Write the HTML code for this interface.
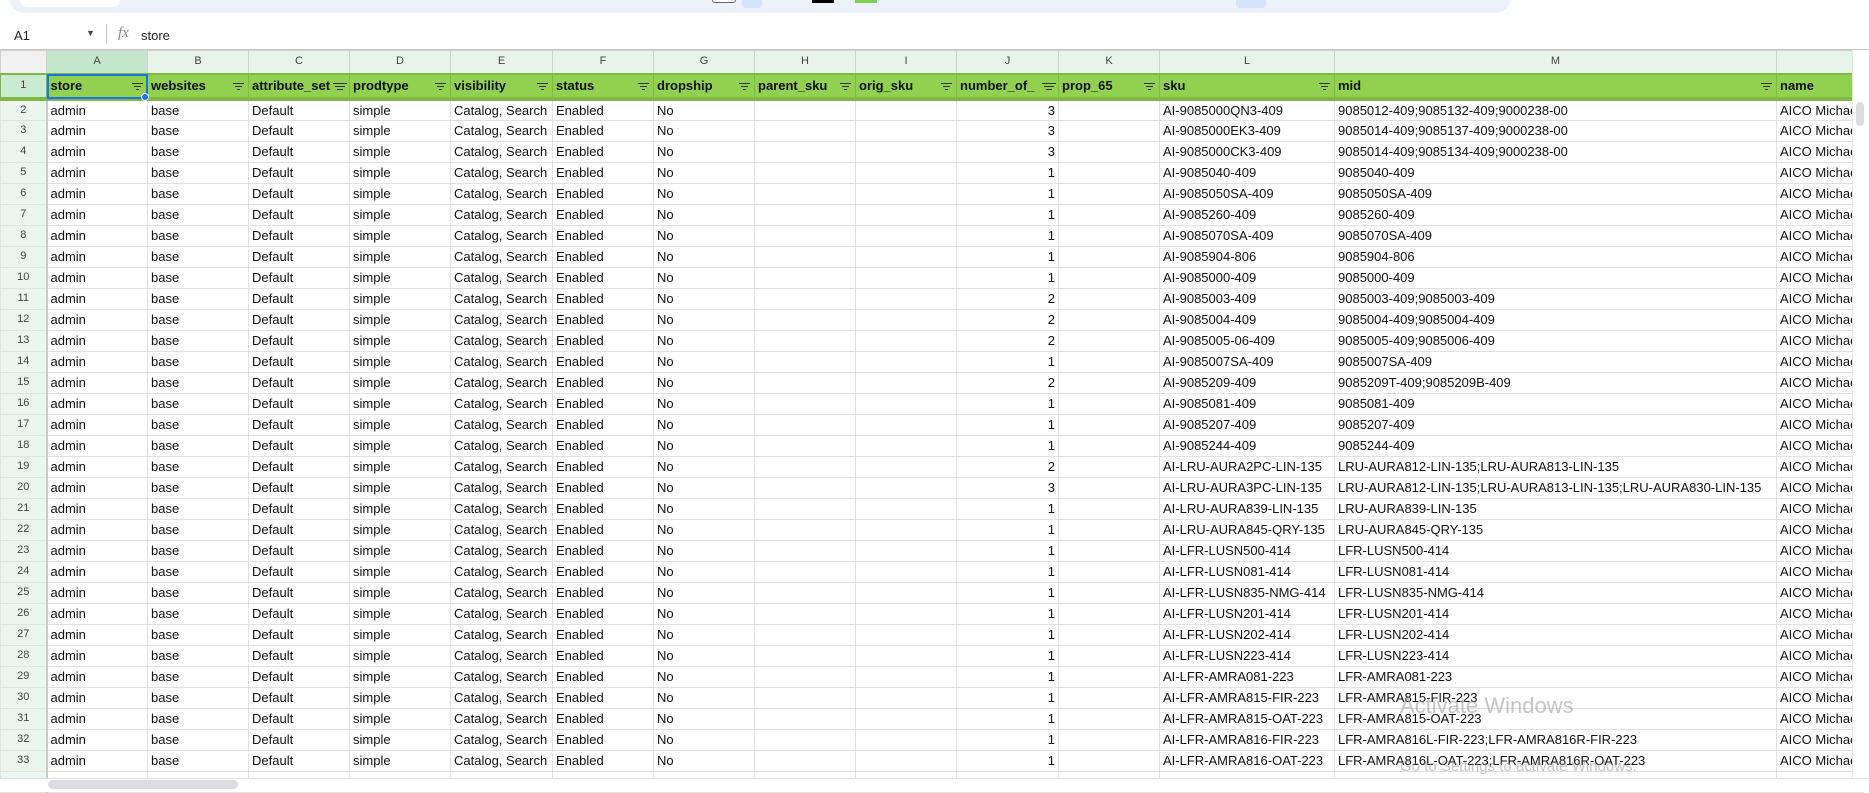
<!DOCTYPE html>
<html><head><meta charset="utf-8"><style>
*{margin:0;padding:0;box-sizing:border-box}
body{width:1869px;height:792px;overflow:hidden;background:#fff;font-family:"Liberation Sans",Arial,sans-serif;position:relative}
.tb{position:absolute;left:10px;top:-20px;width:1500px;height:33px;background:#edf2fa;border-radius:14px}
.fb{position:absolute;left:0;top:20px;width:1869px;height:30px;border-bottom:1px solid #c7c7c7;font-size:13px;color:#222}
table{position:absolute;left:0;top:50px;border-collapse:collapse;table-layout:fixed;font-size:13px}
td{height:21px;border:1px solid #e1e1e1;padding:0 3px;white-space:nowrap;overflow:hidden;color:#111;line-height:19px}
td.n{text-align:center;font-size:11px;color:#444;background:#eaf6ed;border-right:2px solid #c9c9c9}
tr.h td{height:23px;background:#e6f4ea;text-align:center;font-size:11px;color:#444;border-color:#d0d0d0}
tr.h td.sel{background:#c4e7cc}
tr.r1 td{height:25px;background:#92d050;font-weight:bold;border-top:2px solid #2f8a3a;border-bottom:4px solid #c8c8c8;border-color:#7fb846;position:relative}
tr.r1 td.n{background:#c9ebd1;font-weight:normal}
.f{position:absolute;right:4px;top:8px;width:11px;height:7px;border-top:1.3px solid #333}
.f:before{content:"";position:absolute;left:2px;right:2px;top:2px;border-top:1.3px solid #333}
.f:after{content:"";position:absolute;left:4px;right:4px;top:5px;border-top:1.3px solid #333}
td.j{text-align:right}
</style></head><body>
<div class="tb"></div>
<div style="position:absolute;left:20px;top:-8px;width:100px;height:15px;background:#fff;border-radius:8px"></div>
<div style="position:absolute;left:712px;top:0;width:24px;height:3px;background:#fff;border:1px solid #666;border-top:none;border-radius:0 0 4px 4px"></div>
<div style="position:absolute;left:742px;top:0;width:20px;height:8px;background:#d3e3fd;border-radius:0 0 3px 3px"></div>
<div style="position:absolute;left:812px;top:0;width:22px;height:3px;background:#000"></div>
<div style="position:absolute;left:855px;top:0;width:22px;height:3px;background:#7cd152"></div>
<div style="position:absolute;left:1236px;top:0;width:30px;height:8px;background:#d3e3fd;border-radius:0 0 3px 3px"></div>
<div class="fb">
<span style="position:absolute;left:14px;top:8px">A1</span>
<span style="position:absolute;left:86px;top:8px;font-size:9px;color:#444">▼</span>
<span style="position:absolute;left:106px;top:4px;width:1px;height:20px;background:#c7c7c7"></span>
<span style="position:absolute;left:118px;top:5px;font-family:'Liberation Serif',serif;font-style:italic;color:#888;font-size:15px">fx</span>
<span style="position:absolute;left:141px;top:8px">store</span>
</div>
<table>
<colgroup><col style="width:46px"><col style="width:101px"><col style="width:101px"><col style="width:101px"><col style="width:101px"><col style="width:102px"><col style="width:101px"><col style="width:101px"><col style="width:101px"><col style="width:101px"><col style="width:102px"><col style="width:101px"><col style="width:175px"><col style="width:442px"><col style="width:79px"></colgroup>
<tr class="h"><td style="background:#f1f1f1"></td><td class="sel">A</td><td>B</td><td>C</td><td>D</td><td>E</td><td>F</td><td>G</td><td>H</td><td>I</td><td>J</td><td>K</td><td>L</td><td>M</td><td></td></tr>
<tr class="r1"><td class="n">1</td><td style="outline:2px solid #1a73e8;outline-offset:-2px">store<i class="f"></i></td><td>websites<i class="f"></i></td><td>attribute_set<i class="f" style="background:#92d050;width:14px;right:2px"></i></td><td>prodtype<i class="f"></i></td><td>visibility<i class="f"></i></td><td>status<i class="f"></i></td><td>dropship<i class="f"></i></td><td>parent_sku<i class="f"></i></td><td>orig_sku<i class="f"></i></td><td>number_of_<i class="f" style="background:#92d050;width:14px;right:2px"></i></td><td>prop_65<i class="f"></i></td><td>sku<i class="f"></i></td><td>mid<i class="f"></i></td><td>name</td></tr>
<tr><td class="n">2</td><td>admin</td><td>base</td><td>Default</td><td>simple</td><td>Catalog, Search</td><td>Enabled</td><td>No</td><td></td><td></td><td class="j">3</td><td></td><td>AI-9085000QN3-409</td><td>9085012-409;9085132-409;9000238-00</td><td>AICO Michael</td></tr>
<tr><td class="n">3</td><td>admin</td><td>base</td><td>Default</td><td>simple</td><td>Catalog, Search</td><td>Enabled</td><td>No</td><td></td><td></td><td class="j">3</td><td></td><td>AI-9085000EK3-409</td><td>9085014-409;9085137-409;9000238-00</td><td>AICO Michael</td></tr>
<tr><td class="n">4</td><td>admin</td><td>base</td><td>Default</td><td>simple</td><td>Catalog, Search</td><td>Enabled</td><td>No</td><td></td><td></td><td class="j">3</td><td></td><td>AI-9085000CK3-409</td><td>9085014-409;9085134-409;9000238-00</td><td>AICO Michael</td></tr>
<tr><td class="n">5</td><td>admin</td><td>base</td><td>Default</td><td>simple</td><td>Catalog, Search</td><td>Enabled</td><td>No</td><td></td><td></td><td class="j">1</td><td></td><td>AI-9085040-409</td><td>9085040-409</td><td>AICO Michael</td></tr>
<tr><td class="n">6</td><td>admin</td><td>base</td><td>Default</td><td>simple</td><td>Catalog, Search</td><td>Enabled</td><td>No</td><td></td><td></td><td class="j">1</td><td></td><td>AI-9085050SA-409</td><td>9085050SA-409</td><td>AICO Michael</td></tr>
<tr><td class="n">7</td><td>admin</td><td>base</td><td>Default</td><td>simple</td><td>Catalog, Search</td><td>Enabled</td><td>No</td><td></td><td></td><td class="j">1</td><td></td><td>AI-9085260-409</td><td>9085260-409</td><td>AICO Michael</td></tr>
<tr><td class="n">8</td><td>admin</td><td>base</td><td>Default</td><td>simple</td><td>Catalog, Search</td><td>Enabled</td><td>No</td><td></td><td></td><td class="j">1</td><td></td><td>AI-9085070SA-409</td><td>9085070SA-409</td><td>AICO Michael</td></tr>
<tr><td class="n">9</td><td>admin</td><td>base</td><td>Default</td><td>simple</td><td>Catalog, Search</td><td>Enabled</td><td>No</td><td></td><td></td><td class="j">1</td><td></td><td>AI-9085904-806</td><td>9085904-806</td><td>AICO Michael</td></tr>
<tr><td class="n">10</td><td>admin</td><td>base</td><td>Default</td><td>simple</td><td>Catalog, Search</td><td>Enabled</td><td>No</td><td></td><td></td><td class="j">1</td><td></td><td>AI-9085000-409</td><td>9085000-409</td><td>AICO Michael</td></tr>
<tr><td class="n">11</td><td>admin</td><td>base</td><td>Default</td><td>simple</td><td>Catalog, Search</td><td>Enabled</td><td>No</td><td></td><td></td><td class="j">2</td><td></td><td>AI-9085003-409</td><td>9085003-409;9085003-409</td><td>AICO Michael</td></tr>
<tr><td class="n">12</td><td>admin</td><td>base</td><td>Default</td><td>simple</td><td>Catalog, Search</td><td>Enabled</td><td>No</td><td></td><td></td><td class="j">2</td><td></td><td>AI-9085004-409</td><td>9085004-409;9085004-409</td><td>AICO Michael</td></tr>
<tr><td class="n">13</td><td>admin</td><td>base</td><td>Default</td><td>simple</td><td>Catalog, Search</td><td>Enabled</td><td>No</td><td></td><td></td><td class="j">2</td><td></td><td>AI-9085005-06-409</td><td>9085005-409;9085006-409</td><td>AICO Michael</td></tr>
<tr><td class="n">14</td><td>admin</td><td>base</td><td>Default</td><td>simple</td><td>Catalog, Search</td><td>Enabled</td><td>No</td><td></td><td></td><td class="j">1</td><td></td><td>AI-9085007SA-409</td><td>9085007SA-409</td><td>AICO Michael</td></tr>
<tr><td class="n">15</td><td>admin</td><td>base</td><td>Default</td><td>simple</td><td>Catalog, Search</td><td>Enabled</td><td>No</td><td></td><td></td><td class="j">2</td><td></td><td>AI-9085209-409</td><td>9085209T-409;9085209B-409</td><td>AICO Michael</td></tr>
<tr><td class="n">16</td><td>admin</td><td>base</td><td>Default</td><td>simple</td><td>Catalog, Search</td><td>Enabled</td><td>No</td><td></td><td></td><td class="j">1</td><td></td><td>AI-9085081-409</td><td>9085081-409</td><td>AICO Michael</td></tr>
<tr><td class="n">17</td><td>admin</td><td>base</td><td>Default</td><td>simple</td><td>Catalog, Search</td><td>Enabled</td><td>No</td><td></td><td></td><td class="j">1</td><td></td><td>AI-9085207-409</td><td>9085207-409</td><td>AICO Michael</td></tr>
<tr><td class="n">18</td><td>admin</td><td>base</td><td>Default</td><td>simple</td><td>Catalog, Search</td><td>Enabled</td><td>No</td><td></td><td></td><td class="j">1</td><td></td><td>AI-9085244-409</td><td>9085244-409</td><td>AICO Michael</td></tr>
<tr><td class="n">19</td><td>admin</td><td>base</td><td>Default</td><td>simple</td><td>Catalog, Search</td><td>Enabled</td><td>No</td><td></td><td></td><td class="j">2</td><td></td><td>AI-LRU-AURA2PC-LIN-135</td><td>LRU-AURA812-LIN-135;LRU-AURA813-LIN-135</td><td>AICO Michael</td></tr>
<tr><td class="n">20</td><td>admin</td><td>base</td><td>Default</td><td>simple</td><td>Catalog, Search</td><td>Enabled</td><td>No</td><td></td><td></td><td class="j">3</td><td></td><td>AI-LRU-AURA3PC-LIN-135</td><td>LRU-AURA812-LIN-135;LRU-AURA813-LIN-135;LRU-AURA830-LIN-135</td><td>AICO Michael</td></tr>
<tr><td class="n">21</td><td>admin</td><td>base</td><td>Default</td><td>simple</td><td>Catalog, Search</td><td>Enabled</td><td>No</td><td></td><td></td><td class="j">1</td><td></td><td>AI-LRU-AURA839-LIN-135</td><td>LRU-AURA839-LIN-135</td><td>AICO Michael</td></tr>
<tr><td class="n">22</td><td>admin</td><td>base</td><td>Default</td><td>simple</td><td>Catalog, Search</td><td>Enabled</td><td>No</td><td></td><td></td><td class="j">1</td><td></td><td>AI-LRU-AURA845-QRY-135</td><td>LRU-AURA845-QRY-135</td><td>AICO Michael</td></tr>
<tr><td class="n">23</td><td>admin</td><td>base</td><td>Default</td><td>simple</td><td>Catalog, Search</td><td>Enabled</td><td>No</td><td></td><td></td><td class="j">1</td><td></td><td>AI-LFR-LUSN500-414</td><td>LFR-LUSN500-414</td><td>AICO Michael</td></tr>
<tr><td class="n">24</td><td>admin</td><td>base</td><td>Default</td><td>simple</td><td>Catalog, Search</td><td>Enabled</td><td>No</td><td></td><td></td><td class="j">1</td><td></td><td>AI-LFR-LUSN081-414</td><td>LFR-LUSN081-414</td><td>AICO Michael</td></tr>
<tr><td class="n">25</td><td>admin</td><td>base</td><td>Default</td><td>simple</td><td>Catalog, Search</td><td>Enabled</td><td>No</td><td></td><td></td><td class="j">1</td><td></td><td>AI-LFR-LUSN835-NMG-414</td><td>LFR-LUSN835-NMG-414</td><td>AICO Michael</td></tr>
<tr><td class="n">26</td><td>admin</td><td>base</td><td>Default</td><td>simple</td><td>Catalog, Search</td><td>Enabled</td><td>No</td><td></td><td></td><td class="j">1</td><td></td><td>AI-LFR-LUSN201-414</td><td>LFR-LUSN201-414</td><td>AICO Michael</td></tr>
<tr><td class="n">27</td><td>admin</td><td>base</td><td>Default</td><td>simple</td><td>Catalog, Search</td><td>Enabled</td><td>No</td><td></td><td></td><td class="j">1</td><td></td><td>AI-LFR-LUSN202-414</td><td>LFR-LUSN202-414</td><td>AICO Michael</td></tr>
<tr><td class="n">28</td><td>admin</td><td>base</td><td>Default</td><td>simple</td><td>Catalog, Search</td><td>Enabled</td><td>No</td><td></td><td></td><td class="j">1</td><td></td><td>AI-LFR-LUSN223-414</td><td>LFR-LUSN223-414</td><td>AICO Michael</td></tr>
<tr><td class="n">29</td><td>admin</td><td>base</td><td>Default</td><td>simple</td><td>Catalog, Search</td><td>Enabled</td><td>No</td><td></td><td></td><td class="j">1</td><td></td><td>AI-LFR-AMRA081-223</td><td>LFR-AMRA081-223</td><td>AICO Michael</td></tr>
<tr><td class="n">30</td><td>admin</td><td>base</td><td>Default</td><td>simple</td><td>Catalog, Search</td><td>Enabled</td><td>No</td><td></td><td></td><td class="j">1</td><td></td><td>AI-LFR-AMRA815-FIR-223</td><td>LFR-AMRA815-FIR-223</td><td>AICO Michael</td></tr>
<tr><td class="n">31</td><td>admin</td><td>base</td><td>Default</td><td>simple</td><td>Catalog, Search</td><td>Enabled</td><td>No</td><td></td><td></td><td class="j">1</td><td></td><td>AI-LFR-AMRA815-OAT-223</td><td>LFR-AMRA815-OAT-223</td><td>AICO Michael</td></tr>
<tr><td class="n">32</td><td>admin</td><td>base</td><td>Default</td><td>simple</td><td>Catalog, Search</td><td>Enabled</td><td>No</td><td></td><td></td><td class="j">1</td><td></td><td>AI-LFR-AMRA816-FIR-223</td><td>LFR-AMRA816L-FIR-223;LFR-AMRA816R-FIR-223</td><td>AICO Michael</td></tr>
<tr><td class="n">33</td><td>admin</td><td>base</td><td>Default</td><td>simple</td><td>Catalog, Search</td><td>Enabled</td><td>No</td><td></td><td></td><td class="j">1</td><td></td><td>AI-LFR-AMRA816-OAT-223</td><td>LFR-AMRA816L-OAT-223;LFR-AMRA816R-OAT-223</td><td>AICO Michael</td></tr>
<tr><td class="n"></td><td></td><td></td><td></td><td></td><td></td><td></td><td></td><td></td><td></td><td></td><td></td><td></td><td></td><td></td></tr>
</table>
<div style="position:absolute;left:141px;top:93px;width:8px;height:8px;border-radius:50%;background:#1a73e8;border:1px solid #fff"></div>
<div style="position:absolute;left:1852px;top:50px;width:17px;height:730px;background:#fff;border-left:1px solid #e8e8e8"></div>
<div style="position:absolute;left:1856px;top:102px;width:8px;height:24px;background:#dadce0;border-radius:4px"></div>
<div style="position:absolute;left:0;top:778px;width:1869px;height:14px;background:#fff;border-top:1px solid #e0e0e0"></div>
<div style="position:absolute;left:48px;top:780px;width:190px;height:9px;background:#dadce0;border-radius:5px"></div>
<div style="position:absolute;left:1400px;top:693px;font-size:22px;color:rgba(150,150,150,0.55)">Activate Windows</div>
<div style="position:absolute;left:1400px;top:758px;font-size:15px;color:rgba(150,150,150,0.55)">Go to Settings to activate Windows.</div>
</body></html>
